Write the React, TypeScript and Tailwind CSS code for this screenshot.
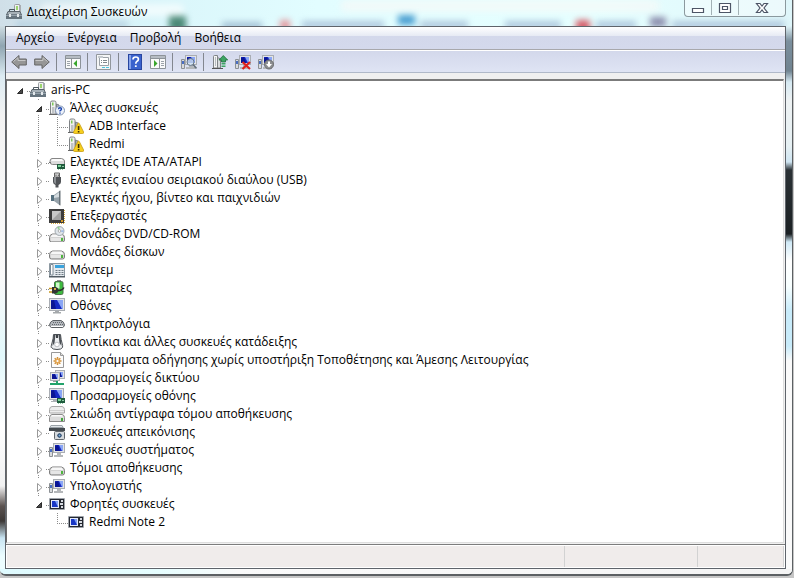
import { useState } from "react";
import type { ReactNode } from "react";

type Device = {
  id: string;
  label: string;
  icon: IconName;
  children?: Device[];
};

// ---- 16x16 drawings -------------------------------------------------------

const Disk = ({ y = 0 }: { y?: number }) => (
  <g transform={`translate(0 ${y})`}>
    <path d="M3.500 7h9q3 .7 3 3.500v2.500q0 2-2 2h-11q-2 0-2-2v-2.500Q.5 7.700 3.500 7z" fill="#d3d3d3" stroke="#7e7e7e" />
    <path d="M3.500 7.500h9l2 2.500h-13z" fill="#f7f7f7" />
    <path d="M2 11h12v3H2z" fill="#e6e6e6" />
    <path d="M12 11h2v3h-2z" fill="#4fb53f" />
  </g>
);

const Tower = () => (
  <g>
    <path d="M1.500 14V2.500q0-1.500 1.500-1.500h2.500q1.500 0 1.500 1.500V14z" fill="#f1f1f1" stroke="#7f8386" />
    <path d="M3 2.500h1.500v3H3z" fill="#7cc857" />
    <path d="M3 7h2.500v6H3z" fill="#bfc3c6" />
    <path d="M7.500 14V4l2.500 1v9z" fill="#a9adb1" stroke="#7f8386" />
    <path d="M0 14.500h12" stroke="#666" />
  </g>
);

const Monitor = ({ x = 0, y = 0, w = 14, h = 10 }: { x?: number; y?: number; w?: number; h?: number }) => (
  <g>
    <rect x={x + 0.5} y={y + 0.5} width={w - 1} height={h - 1} fill="#e3e4e6" stroke="#a9adb3" />
    <rect x={x + 2} y={y + 2} width={w - 4} height={h - 4} fill="#1529c4" />
    <path d={`M${x + w / 2} ${y + 2}H${x + w - 2}V${y + h - 2}H${x + w - 3}z`} fill="#8aa6f5" />
    <path d={`M${x + 2} ${y + h - 2}V${y + 3}l3-1 2 ${h - 4}z`} fill="#0a1593" />
  </g>
);

const PcBase = () => (
  <g>
    <path d="M.5 5.500h3v9h-3z" fill="#d9dbdd" stroke="#8c9094" />
    <path d="M1 7h2v3H1z" fill="#4a6fc4" />
    <Monitor x={4} y={1} w={12} h={10} />
    <path d="M8 11h4v2H8zM5 13h9v2H5z" fill="#b4b7ba" />
  </g>
);

const Chip = () => (
  <g>
    <path d="M8 10h8v5H8z" fill="#1f5b3d" />
    <path d="M9 11h3v2H9z" fill="#7fd39a" />
    <path d="M13 12h2v1h-2zM9 15h1v1H9zM11 15h1v1h-1zM13 15h1v1h-1z" fill="#8ccaa5" />
  </g>
);

const Phone = () => (
  <g>
    <rect x="0" y="2" width="16" height="12" rx="1" fill="#9ea3aa" />
    <rect x="1" y="3" width="14" height="10" fill="#242831" />
    <rect x="2" y="4" width="8" height="8" fill="#e3e9fb" />
    <rect x="3" y="5" width="6" height="6" fill="#1836c4" />
    <path d="M6 5h3v6z" fill="#7fa0f4" />
    <path d="M12 4h2v2h-2zM11 7h3v2h-3zM12 10h2v2h-2z" fill="#d7dbe2" />
  </g>
);

const icons = {
  computer: (
    <g>
      <path d="M8.500 7V1.500q0-1 1-1h4V11h-5z" fill="#f0f1f2" stroke="#9a9ea2" />
      <path d="M10 2h2v4h-2z" fill="#9bd56f" />
      <path d="M13 1h2v9h-2z" fill="#a9adb1" />
      <path d="M3.500 8V5.500h5V8" fill="none" stroke="#4d575f" />
      <path d="M2 7.500h12L15.500 11H.5z" fill="#a7b1b8" stroke="#59636b" />
      <path d="M0 10.500h16V15H0z" fill="#66747e" />
      <path d="M0 11h16v1H0z" fill="#94a1ab" />
      <path d="M3 10h2v3H3zM11 10h2v3h-2z" fill="#e4e9ec" />
    </g>
  ),
  unknown: (
    <g>
      <Tower />
      <circle cx="11" cy="10.500" r="4.500" fill="#eef3fb" stroke="#8194b2" />
      <path d="M9.500 9.300q0-1.500 1.500-1.500t1.500 1.300q0 .8-1.500 1.700v.7" fill="none" stroke="#1c45ae" strokeWidth="1.400" />
      <path d="M10.300 12.400h1.400v1.300h-1.400z" fill="#1c45ae" />
    </g>
  ),
  warning: (
    <g>
      <Tower />
      <path d="M9.800 5.500q.8-1 1.500 0l4.300 8.500q.3 1.500-.8 1.500H6.400q-1.100 0-.8-1.500z" fill="#f6cf1e" stroke="#c79a10" strokeWidth=".8" />
      <path d="M9.800 8h1.600v4H9.800zM9.800 13h1.600v1.400H9.800z" fill="#3d2e00" />
    </g>
  ),
  ide: (
    <g>
      <path d="M3 4.500h9.500q3 .7 3 2.500v3.500H3.500q-2.500 0-2.500-3t2-3z" fill="#dcdcdc" stroke="#868686" />
      <path d="M3.500 5h9l2 2H2z" fill="#fafafa" />
      <path d="M0 8.500h2" stroke="#777" />
      <Chip />
    </g>
  ),
  usb: (
    <g>
      <path d="M5.500 1h5v4h-5z" fill="#e2e2e2" stroke="#666" />
      <path d="M6.500 2.500h1v1.500h-1zM8.800 2.500h1v1.500h-1z" fill="#555" />
      <path d="M4 5h8v5q0 2-2.500 3v2.500h-3V13Q4 12 4 10z" fill="#505357" />
      <path d="M5 5h2v7q-2-1-2-2z" fill="#8b8f93" />
    </g>
  ),
  sound: (
    <g>
      <path d="M2 5h3v6H2z" fill="#56707f" />
      <path d="M5 5l5.500-4v14L5 11z" fill="#97a3ab" />
      <path d="M5 6l5.500-4v5L5 8z" fill="#d5dce0" />
      <path d="M10 1l1.500-.5v15L10 15z" fill="#6a747b" />
    </g>
  ),
  cpu: (
    <g>
      <path d="M2 15.500h13M15.500 2v13" stroke="#d4a53c" strokeDasharray="1 1" />
      <path d="M0 1h15v14H0z" fill="#3c3c3c" />
      <path d="M3 3h9v9H3z" fill="#a2a2a2" />
      <path d="M3 3h9L3 12z" fill="#c8c8c8" />
      <path d="M12 12h2v2h-2z" fill="#d69b27" />
    </g>
  ),
  dvd: (
    <g>
      <Disk y={1} />
      <circle cx="10.500" cy="5" r="4.500" fill="#dfe5ea" stroke="#8f979c" strokeWidth=".8" />
      <path d="M10.500 5L8 1.300l2.500-.6z" fill="#8fce8c" />
      <path d="M10.500 5l4-1v2.500z" fill="#9ebbe8" />
      <circle cx="10.500" cy="5" r="1.300" fill="#fff" stroke="#888" strokeWidth=".6" />
    </g>
  ),
  disk: <Disk />,
  modem: (
    <g>
      <path d="M.5 1.500h15v13H.5z" fill="#e4e9ed" stroke="#8d99a2" />
      <path d="M1.500 2.500h2.500V13H1.500z" fill="#fff" stroke="#7d8a94" />
      <path d="M6 3h9v3H6z" fill="#3aa3dd" />
      <path d="M6.500 8.500h8M6.500 10.500h8M6.500 12.500h8" stroke="#6f7b84" strokeDasharray="2 1" />
      <path d="M0 14h16v1.500H0z" fill="#525c64" />
    </g>
  ),
  battery: (
    <g>
      <path d="M8 0h4v2H8z" fill="#888" />
      <path d="M5.500 3q0-1.500 1.500-1.500h5.500q1.500 0 1.500 1.500v10q0 1.500-1.500 1.500H7q-1.500 0-1.500-1.500z" fill="#3dbb3f" stroke="#4b704b" />
      <path d="M7 2.500h3.500v6H7z" fill="#d2f6cd" />
      <path d="M3 7h4q2.500 1 2.500 3.300T7 13.500H3z" fill="#333" />
      <path d="M0 8.500h3M0 12h3" stroke="#c8981d" strokeWidth="1.500" />
      <path d="M9 10.500q4 .5 6-3" fill="none" stroke="#2b2b2b" strokeWidth="1.500" />
      <path d="M5 8h2v2H5z" fill="#d8b04a" />
    </g>
  ),
  display: (
    <g>
      <Monitor x={0} y={0} w={16} h={13} />
      <path d="M6 13h4v1H6zM4 14h8v1.500H4z" fill="#a5a9ac" />
    </g>
  ),
  keyboard: (
    <g>
      <path d="M4 4.500h8q3 1 3.500 4.500-.5 2.500-2.500 2.500H3Q1 11.500.5 9 1 5.500 4 4.500z" fill="#b4b8bd" stroke="#5d6165" />
      <path d="M4 6.500h9M3 8.500h11" stroke="#64696e" strokeDasharray="1 1" />
      <path d="M2 10.500h12" stroke="#fff" />
    </g>
  ),
  mouse: (
    <g>
      <path d="M4.500.5Q4.500 4 3 9t-.5 4.500q1 2 5.500 2t5.500-2Q14 12 13 9T11.500.5z" fill="#eceef0" stroke="#4a4f54" />
      <path d="M4.500 1h2L5.500 9 3.500 12zM11.500 1h-2l1 8 2 3z" fill="#4a4f54" />
      <path d="M7 1h2v3H7z" fill="#3c4146" />
      <circle cx="8" cy="10.500" r="2.300" fill="#fff" stroke="#9a9ea2" strokeWidth=".6" />
    </g>
  ),
  driver: (
    <g>
      <path d="M2.500.5h9l3 3v12h-12z" fill="#fcfcfc" stroke="#989898" />
      <path d="M11.500.5v3h3" fill="#ddd" stroke="#989898" />
      <path d="M8.500 5v8M4.500 9h8M5.700 6.200l5.600 5.600M11.300 6.200l-5.600 5.600" stroke="#cf8e35" strokeWidth="1.500" />
      <circle cx="8.500" cy="9" r="2.500" fill="#e4a653" />
      <circle cx="8.500" cy="9" r="1.100" fill="#fff" />
    </g>
  ),
  network: (
    <g>
      <Monitor x={6} y={0} w={10} h={9} />
      <Monitor x={1} y={2} w={10} h={9} />
      <path d="M4 11h4v1H4z" fill="#999" />
      <path d="M7 11h2v2h6v2H1v-2h6z" fill="#22a36b" />
    </g>
  ),
  adapter: (
    <g>
      <Monitor x={0} y={0} w={15} h={12} />
      <path d="M4 12h4v2H2v-1h2z" fill="#abb0b4" />
      <Chip />
    </g>
  ),
  shadow: (
    <g>
      <path d="M3 .5h10q2.500.5 2.500 3V7H.5V3.500Q.5 1 3 .5z" fill="#ededed" stroke="#a8a8a8" />
      <path d="M1 4.500h14" stroke="#cfcfcf" />
      <path d="M3 8.500h10q2.500.5 2.500 3v4H.5v-4q0-2.500 2.500-3z" fill="#dcdcdc" stroke="#8a8a8a" />
      <path d="M3 9h10l1 1.500H2z" fill="#fafafa" />
      <path d="M12 12h2v3h-2z" fill="#44a53c" />
    </g>
  ),
  imaging: (
    <g>
      <path d="M2 1h11l2 3H0z" fill="#9aa2a8" />
      <path d="M0 4h16v3H0z" fill="#454b50" />
      <path d="M2 2.500h11" stroke="#e1e5e8" />
      <rect x="5.500" y="7.500" width="10" height="8" rx="1" fill="#d5d9dc" stroke="#60666b" />
      <circle cx="10.500" cy="11.500" r="2.800" fill="#2f4d6e" stroke="#f5f5f5" />
      <circle cx="10.500" cy="11.500" r="1" fill="#7fb3e5" />
    </g>
  ),
  system: <PcBase />,
  phone: <Phone />,
  back: (
    <g>
      <path d="M.7 8L8 1.500V5h7.300v6H8v3.500z" fill="#969696" stroke="#656565" />
      <path d="M2.500 7.500L7 3.700V6.500h7.500" fill="none" stroke="#c6c6c6" />
    </g>
  ),
  forward: (
    <g>
      <path d="M15.300 8L8 1.500V5H.7v6H8v3.500z" fill="#969696" stroke="#656565" />
      <path d="M1.500 6.500H9V3.700l4.500 3.800" fill="none" stroke="#c6c6c6" />
    </g>
  ),
  tree: (
    <g>
      <path d="M.5 1.500h15v13H.5z" fill="#fafafa" stroke="#8d9399" />
      <path d="M1 2h14v2H1z" fill="#b6bcc3" />
      <path d="M1 4.500h14M6.500 5v9" stroke="#8d9399" />
      <path d="M2 7.500h3M2 9.500h3M2 11.500h3" stroke="#9ca3aa" />
      <path d="M12 6v7L8.500 9.500z" fill="#39a52c" />
    </g>
  ),
  properties: (
    <g>
      <path d="M.5.5h14v15H.5z" fill="#f4f5f6" stroke="#92979c" />
      <path d="M3.500 3.500h9v8h-9z" fill="#fff" stroke="#9ba1a7" />
      <path d="M2 2h5v2H2z" fill="#c5cacf" />
      <path d="M5 6.500h1M7 6.500h4M5 8.500h1M7 8.500h4" stroke="#7e868d" />
      <path d="M6 13.500h3M10 13.500h3" stroke="#4bc4df" />
    </g>
  ),
  help: (
    <g>
      <rect x="1.500" y=".5" width="13" height="15" fill="#3a62cd" stroke="#2846a0" />
      <path d="M2 1h2v14H2z" fill="#86a2ea" />
      <path d="M6 5.500Q6 3 8.700 3t2.700 2.300q0 1.400-1.600 2.300-1 .6-1 2.200" fill="none" stroke="#fff" strokeWidth="1.700" />
      <path d="M7.900 11.300h1.800V13H7.900z" fill="#fff" />
    </g>
  ),
  action: (
    <g>
      <path d="M.5 1.500h15v13H.5z" fill="#fafafa" stroke="#8d9399" />
      <path d="M1 2h14v2H1z" fill="#b6bcc3" />
      <path d="M1 4.500h14M9.500 5v9" stroke="#8d9399" />
      <path d="M11 7.500h3M11 9.500h3M11 11.500h3" stroke="#9ca3aa" />
      <path d="M4 6v7l3.500-3.500z" fill="#39a52c" />
    </g>
  ),
  scan: (
    <g>
      <PcBase />
      <circle cx="9.500" cy="8" r="3.500" fill="#cfe2f5" fillOpacity=".85" stroke="#68798a" />
      <path d="M12 10.500l3.500 4" stroke="#64707b" strokeWidth="1.800" />
    </g>
  ),
  update: (
    <g>
      <path d="M1.500 14V2.500q0-1 1-1h3V14z" fill="#f3f3f3" stroke="#7f8386" />
      <path d="M3 3h1v9H3z" fill="#b7bdc1" />
      <path d="M5.500 14V3.500L8.500 5v9z" fill="#d8dbdd" stroke="#7f8386" />
      <path d="M0 14.500h11" stroke="#555" />
      <path d="M11.300 1.500L15.700 6H13.500v2h-4V6H6.900z" fill="#3da564" stroke="#1f6e3d" strokeWidth=".8" />
      <path d="M9.500 9h4v1.500h-4zM9.500 11.500h4V13h-4z" fill="#3da564" />
    </g>
  ),
  uninstall: (
    <g>
      <PcBase />
      <path d="M7.500 8l7.500 7M15 8l-7.500 7" stroke="#e0201c" strokeWidth="2.200" />
    </g>
  ),
  disable: (
    <g>
      <PcBase />
      <circle cx="11" cy="10.500" r="4.500" fill="#8d8f91" stroke="#6b6d6f" />
      <path d="M10 7.500h2V10h2l-3 3.500L8 10h2z" fill="#fff" />
    </g>
  ),
};

type IconName = keyof typeof icons;

function Icon({ name }: { name: IconName }) {
  return (
    <svg viewBox="0 0 16 16" className="size-4 shrink-0" aria-hidden="true">
      {icons[name]}
    </svg>
  );
}

// ---- data -----------------------------------------------------------------

const root: Device = {
  id: "root",
  label: "aris-PC",
  icon: "computer",
  children: [
    {
      id: "other",
      label: "Άλλες συσκευές",
      icon: "unknown",
      children: [
        { id: "adb", label: "ADB Interface", icon: "warning" },
        { id: "redmi", label: "Redmi", icon: "warning" },
      ],
    },
    { id: "ide", label: "Ελεγκτές IDE ATA/ATAPI", icon: "ide", children: [] },
    { id: "usb", label: "Ελεγκτές ενιαίου σειριακού διαύλου (USB)", icon: "usb", children: [] },
    { id: "sound", label: "Ελεγκτές ήχου, βίντεο και παιχνιδιών", icon: "sound", children: [] },
    { id: "cpu", label: "Επεξεργαστές", icon: "cpu", children: [] },
    { id: "dvd", label: "Μονάδες DVD/CD-ROM", icon: "dvd", children: [] },
    { id: "disk", label: "Μονάδες δίσκων", icon: "disk", children: [] },
    { id: "modem", label: "Μόντεμ", icon: "modem", children: [] },
    { id: "battery", label: "Μπαταρίες", icon: "battery", children: [] },
    { id: "display", label: "Οθόνες", icon: "display", children: [] },
    { id: "keyboard", label: "Πληκτρολόγια", icon: "keyboard", children: [] },
    { id: "mouse", label: "Ποντίκια και άλλες συσκευές κατάδειξης", icon: "mouse", children: [] },
    {
      id: "driver",
      label: "Προγράμματα οδήγησης χωρίς υποστήριξη Τοποθέτησης και Άμεσης Λειτουργίας",
      icon: "driver",
      children: [],
    },
    { id: "network", label: "Προσαρμογείς δικτύου", icon: "network", children: [] },
    { id: "adapter", label: "Προσαρμογείς οθόνης", icon: "adapter", children: [] },
    { id: "shadow", label: "Σκιώδη αντίγραφα τόμου αποθήκευσης", icon: "shadow", children: [] },
    { id: "imaging", label: "Συσκευές απεικόνισης", icon: "imaging", children: [] },
    { id: "system", label: "Συσκευές συστήματος", icon: "system", children: [] },
    { id: "volume", label: "Τόμοι αποθήκευσης", icon: "disk", children: [] },
    { id: "pc", label: "Υπολογιστής", icon: "system", children: [] },
    {
      id: "portable",
      label: "Φορητές συσκευές",
      icon: "phone",
      children: [{ id: "note", label: "Redmi Note 2", icon: "phone" }],
    },
  ],
};

const menus = ["Αρχείο", "Ενέργεια", "Προβολή", "Βοήθεια"];

const toolbar: { icon: IconName; label: string }[][] = [
  [
    { icon: "back", label: "Πίσω" },
    { icon: "forward", label: "Εμπρός" },
  ],
  [{ icon: "tree", label: "Δέντρο κονσόλας" }],
  [{ icon: "properties", label: "Ιδιότητες" }],
  [
    { icon: "help", label: "Βοήθεια" },
    { icon: "action", label: "Παράθυρο ενεργειών" },
  ],
  [{ icon: "scan", label: "Σάρωση για αλλαγές υλικού" }],
  [
    { icon: "update", label: "Ενημέρωση προγράμματος οδήγησης" },
    { icon: "uninstall", label: "Κατάργηση εγκατάστασης" },
    { icon: "disable", label: "Απενεργοποίηση" },
  ],
];

// ---- tree -----------------------------------------------------------------

// One 19px column of dotted connector lines
function Guide({ d }: { d: string }) {
  return (
    <svg
      viewBox="0 0 19 18"
      className="h-[18px] w-[19px] shrink-0"
      fill="none"
      stroke="#8c8c8c"
      strokeDasharray="1 1"
      shapeRendering="crispEdges"
      aria-hidden="true"
    >
      <path d={d} />
    </svg>
  );
}

type NodeProps = {
  node: Device;
  // for each ancestor column: does its line go on below this row
  lines: boolean[];
  last: boolean;
  closed: string[];
  onToggle: (id: string) => void;
};

function TreeNode({ node, lines, last, closed, onToggle }: NodeProps) {
  const kids = node.children;
  const isRoot = node.id === "root";
  const open = !!kids?.length && !closed.includes(node.id);

  return (
    <li role="treeitem" aria-expanded={kids ? open : undefined}>
      <div className="flex h-[18px] items-center">
        {lines.map((on, i) => (
          <Guide key={i} d={on ? "M8.5 0V18" : ""} />
        ))}
        {kids ? (
          <button
            type="button"
            aria-label={node.label}
            onClick={() => onToggle(node.id)}
            className="h-[18px] w-[19px] shrink-0"
          >
            <svg viewBox="0 0 19 18" className="h-[18px] w-[19px]" aria-hidden="true">
              <path
                d={isRoot ? "M16 10.5h3" : last ? "M8.500 0v2M16 10.500h3" : "M8.500 0v2M8.500 16v2M16 10.500h3"}
                stroke="#8c8c8c"
                strokeDasharray="1 1"
                shapeRendering="crispEdges"
              />
              {open ? (
                <path d="M11.500 7.500v5h-5z" fill="#4a4a4a" stroke="#2c2c2c" strokeLinejoin="round" />
              ) : (
                <path d="M7.500 6.500v8l4.500-4z" fill="#fff" stroke="#999" />
              )}
            </svg>
          </button>
        ) : (
          <Guide d={last ? "M8.500 0V10M8 10.500H19" : "M8.500 0V18M8 10.500H19"} />
        )}
        <Icon name={node.icon} />
        <span className="ml-[5px] whitespace-nowrap">{node.label}</span>
      </div>
      {open && (
        <ul role="group">
          {kids.map((child, i) => (
            <TreeNode
              key={child.id}
              node={child}
              lines={isRoot ? [false] : [...lines, !last]}
              last={i === kids.length - 1}
              closed={closed}
              onToggle={onToggle}
            />
          ))}
        </ul>
      )}
    </li>
  );
}

// ---- window chrome --------------------------------------------------------

function CaptionButton({ label, className, children }: { label: string; className: string; children: ReactNode }) {
  return (
    <button type="button" aria-label={label} className={"flex h-[15px] items-center justify-center " + className}>
      <svg
        viewBox="0 0 14 12"
        className="h-3 w-3.5"
        fill="#fff"
        stroke="#4d5566"
        strokeWidth="1.2"
        aria-hidden="true"
      >
        {children}
      </svg>
    </button>
  );
}

function TitleBar() {
  return (
    <header className="relative flex h-[26px] items-start overflow-hidden bg-[linear-gradient(to_right,#d0dfe8,#d9f5fa_18%,#e2fdff_40%,#e6ffff_75%,#dff6fa)]">
      {/* what shines through the glass */}
      <div aria-hidden="true" className="absolute inset-0 blur-[3px]">
        <span className="absolute top-1 left-10 h-3 w-36 rounded-full bg-white/60" />
        <span className="absolute top-0 left-[340px] h-3 w-80 rounded-full bg-[#f6faf8]/70" />
        <span className="absolute top-[21px] left-4 h-2 w-28 bg-[#b5cfe0]/80" />
        <span className="absolute top-[16px] left-[169px] h-4 w-[17px] bg-[#4d8a78]" />
        <span className="absolute top-[22px] left-[222px] h-2 w-10 bg-[#a5c2d6]" />
        <span className="absolute top-[20px] left-[280px] h-3 w-2.5 bg-[#e39aa0]" />
        <span className="absolute top-[21px] left-[302px] h-2 w-[82px] bg-[#b0c9de]" />
        <span className="absolute top-[15px] left-[398px] h-2.5 w-[17px] bg-[#4ba0d2]" />
        <span className="absolute top-[21px] left-[420px] h-2 w-12 bg-[#b0c9de]" />
        <span className="absolute top-[21px] left-[505px] h-2 w-14 bg-[#b0c9de]" />
        <span className="absolute top-[20px] left-[576px] h-3 w-3.5 bg-[#d6606c]" />
        <span className="absolute top-[21px] left-[596px] h-2 w-10 bg-[#b0c9de]" />
        <span className="absolute top-[17px] left-[650px] h-2.5 w-4 bg-[#8d8fae]" />
        <span className="absolute top-[21px] left-[672px] h-2 w-28 bg-[#b0c9de]" />
      </div>
      <div className="relative flex items-center gap-[5px] pt-1 pl-1.5">
        <Icon name="computer" />
        <h1 className="leading-4">Διαχείριση Συσκευών</h1>
      </div>
      <div className="relative mr-1.5 ml-auto flex h-[17px] divide-x divide-[#a3b2b6] rounded-b-[4px] border border-t-0 border-[#8b999e] bg-white/40">
        <CaptionButton label="Ελαχιστοποίηση" className="w-[27px]">
          <path d="M1.500 6.500h11v4h-11z" />
        </CaptionButton>
        <CaptionButton label="Μεγιστοποίηση" className="w-[27px]">
          <path d="M1.500 1.500h11v9h-11zM4.500 4.500h5v3h-5z" />
        </CaptionButton>
        <CaptionButton label="Κλείσιμο" className="w-[46px]">
          <path d="M1.500 1.500h3.500L7 4l2-2.500h3.500L9 6l3.500 4.500H9L7 8l-2 2.500H1.500L5 6z" />
        </CaptionButton>
      </div>
    </header>
  );
}

function App() {
  const [closed, setClosed] = useState<string[]>([]);

  function toggle(id: string) {
    setClosed((prev) => (prev.includes(id) ? prev.filter((x) => x !== id) : [...prev, id]));
  }

  return (
    <div className="flex min-h-screen flex-col bg-[#c6c6c6] pr-px pb-0.5 font-['Open_Sans','Noto_Sans',sans-serif] text-xs text-black">
      <div className="flex grow flex-col overflow-hidden rounded-b-md border-r border-b-2 border-[#5c6063] bg-[#f4fcfd]">
        <TitleBar />
        <div className="flex grow">
          <div className="w-[5px] shrink-0 bg-[linear-gradient(to_bottom,#cfdde3_0px,#8fa5b1_20px,#dcebf2_50px,#f3f3f3_90px,#fafafa_250px,#e2f8fb_330px,#fff_400px,#f1f1f1_460px,#5b5350_480px,#3c3836_495px,#c8e4f2_512px,#ecfdff_530px)]" />

          <div className="flex min-w-0 grow flex-col border border-[#5f646b] bg-[#f0f0f0]">
            <nav className="flex h-[22px] items-center gap-[13px] bg-[linear-gradient(to_bottom,#fff_0px,#e6eaf4_9px,#d3d8eb_9px,#d4d9ec_22px)] pl-2.5">
              {menus.map((m) => (
                <button key={m} type="button" className="leading-4">
                  {m}
                </button>
              ))}
            </nav>

            <div className="flex h-6 items-center divide-x divide-[#83878f] border-t border-b border-t-[#a8a8ac] border-b-[#b0b9c9] bg-[linear-gradient(to_bottom,#fff_0px,#fff_1px,#d3d8eb_1px,#dfe4f4_22px)] pt-0.5 pl-px">
              {toolbar.map((group, i) => (
                <div key={i} className={i ? "flex pr-[3px] pl-1" : "flex pr-[3px]"}>
                  {group.map((b) => (
                    <button
                      key={b.icon}
                      type="button"
                      aria-label={b.label}
                      className="flex h-[18px] w-[23px] items-center justify-center"
                    >
                      <Icon name={b.icon} />
                    </button>
                  ))}
                </div>
              ))}
            </div>

            <main className="mt-1.5 mr-px flex-1 border-t-2 border-r border-b border-l border-t-[#7b7b7b] border-r-[#dedede] border-b-[#dedede] border-l-[#6d6d6d] bg-white pl-1">
              <ul role="tree" aria-label="Συσκευές">
                <TreeNode node={root} lines={[]} last closed={closed} onToggle={toggle} />
              </ul>
            </main>

            <footer className="mt-px flex h-6 border-t border-[#7c7c7c] bg-white p-px">
              <div className="grow border-r border-[#d2d2d2] bg-[#f0eceb]" />
              <div className="w-[133px] border-r border-[#d2d2d2] bg-[#f0eceb]" />
              <div className="w-[86px] border-r border-[#d2d2d2] bg-[#f0eceb]" />
            </footer>
          </div>

          <div className="w-1.5 shrink-0 bg-[linear-gradient(to_bottom,#dff3f8_0px,#7b8f9d_15px,#708390_45px,#d6e9f2_56px,#eef2f3_75px,#e6f0f3_120px,#cfe5f2_136px,#2a3135_144px,#1b2023_208px,#cfe9f6_216px,#fff_235px,#f8ffff_260px,#c8ebfa_285px,#c8ebfa_320px,#fafafa_335px)]" />
        </div>
        <div className="h-[5px] shrink-0 bg-[linear-gradient(to_right,#dffbff,#e6feff_20%,#fafafa_30%,#f4f4f4)]" />
      </div>
    </div>
  );
}

export default App;
